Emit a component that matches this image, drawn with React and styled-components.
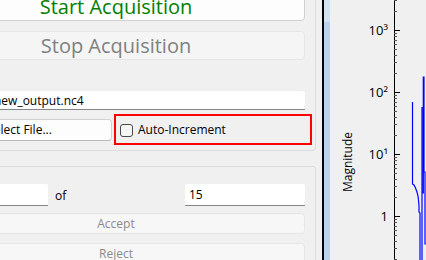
import styled, { createGlobalStyle } from 'styled-components';

const GlobalStyle = createGlobalStyle`
  html, body {
    margin: 0;
    padding: 0;
    background: #f0f0f0;
    overflow: hidden;
  }
  body {
    font-family: "Open Sans", "Noto Sans", sans-serif;
    font-size: 12px;
    color: #000;
  }
`;

// decade positions on the log axis (px from top of plot)
const DECADES = [
  { y: 30, label: '10³' },
  { y: 92, label: '10²' },
  { y: 154, label: '10¹' },
  { y: 216, label: '1' }
];
const DECADE_PX = 62;
const AXIS_X = 64;

const minorTicks = () => {
  const ticks = [];
  [...DECADES, { y: 278 }].forEach((d) => {
    for (let m = 2; m <= 9; m++) {
      const y = d.y - DECADE_PX * Math.log10(m);
      if (y > -2 && y < 262) ticks.push(y);
    }
  });
  return ticks;
};

const TRACE = [
  [82.5, 102], [82.5, 184], [84, 185], [85.5, 188], [87, 192], [88, 196],
  [88.5, 200], [89, 206], [89, 212], [90, 213], [90, 262]
];
const TRACE2 = [
  [92, 262], [92, 107], [92, 193], [93.3, 193], [93.3, 77], [94, 77],
  [94, 172], [95, 172], [95, 244], [96, 244]
];

const MagnitudePlot = () => (
  <S_PlotSvg width="96" height="260" viewBox="0 0 96 260">
    <text x="22" y="162" transform="rotate(-90 22 162)" textAnchor="middle" fontSize="12">
      Magnitude
    </text>
    <line x1={AXIS_X + 0.5} y1="0" x2={AXIS_X + 0.5} y2="260" stroke="#000" />
    {DECADES.map((d) => (
      <g key={d.label}>
        <line x1={AXIS_X} y1={d.y + 0.5} x2={AXIS_X + 6} y2={d.y + 0.5} stroke="#000" />
        <text x="58" y={d.y + 5} textAnchor="end" fontSize="13">
          {d.label}
        </text>
      </g>
    ))}
    {minorTicks().map((y, i) => (
      <line key={i} x1={AXIS_X} y1={Math.round(y) + 0.5} x2={AXIS_X + 3} y2={Math.round(y) + 0.5} stroke="#555" />
    ))}
    <polyline points={TRACE.map((p) => p.join(',')).join(' ')} fill="none" stroke="#0000ff" strokeWidth="1.2" />
    <polyline points={TRACE2.map((p) => p.join(',')).join(' ')} fill="none" stroke="#0000ff" strokeWidth="1.2" />
  </S_PlotSvg>
);

const App = () => {
  return (
    <>
      <GlobalStyle />
      <S_Window>
        <S_LeftPanel>
          <S_GroupBox $pad="11px 10px 5px 10px">
            <S_BigButton $color="#008000" $bg="#fdfdfd" $border="#d0d0d0">
              Start Acquisition
            </S_BigButton>
            <S_BigButton $color="#808080" $bg="#f5f5f5" $border="#e6e6e6" disabled style={{ marginTop: 10 }}>
              Stop Acquisition
            </S_BigButton>
            <S_FileRow>
              <S_Label>File:</S_Label>
              <S_TextField $height={19} defaultValue="new_output.nc4" />
            </S_FileRow>
            <S_SelectRow>
              <S_Button>Select File...</S_Button>
              <S_Highlight>
                <S_CheckBox type="checkbox" />
                <span>Auto-Increment</span>
              </S_Highlight>
            </S_SelectRow>
          </S_GroupBox>

          <S_GroupBox $pad="17px 10px 0 10px" style={{ marginTop: 15 }}>
            <S_CountRow>
              <S_TextField $height={22} defaultValue="" />
              <S_Label>of</S_Label>
              <S_TextField $height={22} defaultValue="15" />
            </S_CountRow>
            <S_ActionButton disabled $top={7}>Accept</S_ActionButton>
            <S_ActionButton disabled $top={9}>Reject</S_ActionButton>
          </S_GroupBox>
        </S_LeftPanel>

        <S_Frame />
        <S_ScrollTrack>
          <S_ScrollCap />
        </S_ScrollTrack>
        <MagnitudePlot />
      </S_Window>
    </>
  );
};

export default App;

const S_Window = styled.div`
  display: flex;
  height: 260px;
  width: 426px;
  overflow: hidden;
`;

const S_LeftPanel = styled.div`
  flex: none;
  display: flex;
  flex-direction: column;
  width: 400px;
  margin-left: -84px;
  margin-top: -20px;
`;

const S_GroupBox = styled.div`
  display: flex;
  flex-direction: column;
  box-sizing: border-box;
  border: 1px solid #dcdcdc;
  border-radius: 3px;
  padding: ${(p) => p.$pad};
`;

const S_BigButton = styled.button`
  box-sizing: border-box;
  height: 29px;
  border: 1px solid ${(p) => p.$border};
  border-radius: 4px;
  background: ${(p) => p.$bg};
  color: ${(p) => p.$color};
  font-family: "Open Sans", "Noto Sans", sans-serif;
  font-size: 20px;
  line-height: 1;
  padding: 0;
`;

const S_FileRow = styled.div`
  display: grid;
  grid-template-columns: 57px 1fr;
  gap: 6px;
  align-items: center;
  margin-top: 31px;
`;

const S_Label = styled.span`
  font-size: 12px;
  white-space: nowrap;
`;

const S_TextField = styled.input`
  box-sizing: border-box;
  height: ${(p) => p.$height}px;
  width: 100%;
  min-width: 0;
  border: none;
  border-bottom: 1px solid #868686;
  border-radius: 2px 2px 0 0;
  background: #fff;
  padding: 0 4px;
  font-family: "Open Sans", "Noto Sans", sans-serif;
  font-size: 12px;
  color: #000;
  outline: none;
`;

const S_SelectRow = styled.div`
  display: grid;
  grid-template-columns: 185px 1fr;
  gap: 2px;
  align-items: center;
  margin-top: 4px;
`;

const S_Button = styled.button`
  box-sizing: border-box;
  height: 22px;
  border: 1px solid #d0d0d0;
  border-bottom-color: #b8b8b8;
  border-radius: 4px;
  background: #fdfdfd;
  font-family: "Open Sans", "Noto Sans", sans-serif;
  font-size: 12px;
  color: #000;
  padding: 0;
`;

const S_Highlight = styled.label`
  box-sizing: border-box;
  height: 31px;
  margin-right: -7px;
  display: flex;
  align-items: center;
  gap: 5px;
  padding-left: 4px;
  border: 2px solid #ff0000;
  font-size: 12px;
`;

const S_CheckBox = styled.input`
  appearance: none;
  box-sizing: border-box;
  width: 13px;
  height: 13px;
  margin: 1px 0 0 0;
  border: 1px solid #4a4a4a;
  border-radius: 3px;
  background: #f5f5f5;
`;

const S_CountRow = styled.div`
  display: grid;
  grid-template-columns: 121px 1fr 120px;
  column-gap: 7px;
  align-items: center;
`;

const S_ActionButton = styled.button`
  box-sizing: border-box;
  height: 21px;
  margin-top: ${(p) => p.$top}px;
  border: 1px solid #e6e6e6;
  border-radius: 4px;
  background: #f7f7f7;
  color: #8a8a8a;
  font-family: "Open Sans", "Noto Sans", sans-serif;
  font-size: 12px;
  padding: 0;
`;

const S_Frame = styled.div`
  flex: none;
  width: 2px;
  margin-left: 6px;
  background: #000;
`;

const S_ScrollTrack = styled.div`
  flex: none;
  width: 6px;
  background: #b9d1ea;
`;

const S_ScrollCap = styled.div`
  height: 22px;
  background: #d3e2f2;
`;

const S_PlotSvg = styled.svg`
  flex: none;
  display: block;
  font-family: "Open Sans", "Noto Sans", sans-serif;
`;
